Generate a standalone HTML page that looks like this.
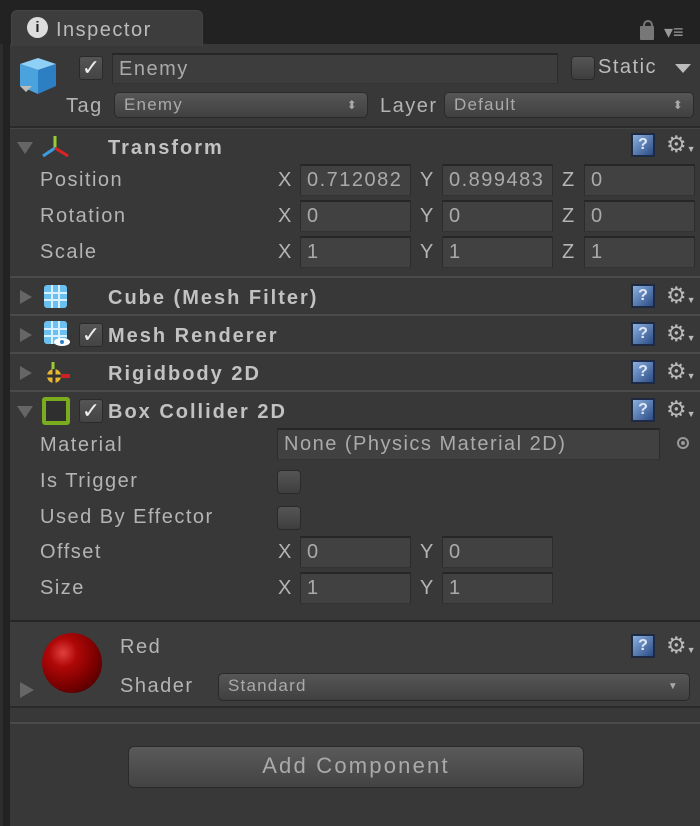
<!DOCTYPE html>
<html><head><meta charset="utf-8"><style>
*{margin:0;padding:0;box-sizing:border-box}
body{width:700px;height:826px;background:#222;position:relative;overflow:hidden;font-family:"Liberation Sans",sans-serif;font-size:20px;color:#b4b4b4}
.a{position:absolute}
.t{position:absolute;white-space:nowrap;line-height:24px;letter-spacing:1.5px}
.b{font-weight:bold;color:#c2c2c2;letter-spacing:2px}
.f{position:absolute;background:#414141;border-top:2px solid #262626;border-left:1px solid #2c2c2c;border-right:1px solid #2c2c2c;border-bottom:1px solid #333;height:32px;color:#aaa;padding-left:6px;line-height:29px;font-size:20px;white-space:nowrap;overflow:hidden;letter-spacing:1.5px}
.cb{position:absolute;width:24px;height:24px;border-radius:4px;background:linear-gradient(#555,#3e3e3e);border:1px solid #2a2a2a}
.ck{position:absolute;width:24px;height:24px;border-radius:3px;background:linear-gradient(#555,#444);border:1px solid #2a2a2a;color:#eee;font-size:22px;line-height:22px;text-align:center}
.dd{position:absolute;height:26px;border-radius:5px;background:linear-gradient(#565656,#404040);border:1px solid #2a2a2a;color:#aaa;font-size:17px;line-height:24px;padding-left:9px;letter-spacing:1.2px}
.tri{position:absolute;width:0;height:0}
.sepd{position:absolute;left:10px;right:0;height:2px;background:#2a2a2a}
.sepl{position:absolute;left:10px;right:0;height:2px;background:#4a4a4a}
.help{position:absolute;width:24px;height:24px;background:linear-gradient(135deg,#8ab0e0,#2c4c84);border:2px solid #1e2a44;color:#e0e8f8;font-size:16px;line-height:20px;text-align:center;font-weight:bold}
.gear{position:absolute;font-size:23px;color:#b8b8b8;line-height:24px}
</style></head><body>
<div class="a" style="left:0;top:44px;width:3px;height:782px;background:#2d2d2d"></div>
<div class="a" style="left:10px;top:44px;width:690px;height:782px;background:#383838"></div>
<div class="a" style="left:11px;top:10px;width:192px;height:36px;background:#3d3d3d;border-radius:6px 6px 0 0;border:1px solid #444;border-bottom:none"></div>
<div class="a" style="left:27px;top:17px;width:21px;height:21px;border-radius:50%;background:#ddd;color:#222;font-size:15px;font-weight:bold;text-align:center;line-height:21px">i</div>
<div class="t" style="left:56px;top:18px;color:#bbb">Inspector</div>
<div class="a" style="left:640px;top:26px;width:14px;height:14px;background:#777;border-radius:1px"></div>
<div class="a" style="left:643px;top:20px;width:10px;height:10px;border:2px solid #777;border-bottom:none;border-radius:5px 5px 0 0"></div>
<div class="t" style="left:664px;top:20px;color:#999;font-size:18px;letter-spacing:0">▾≡</div>
<svg class="a" style="left:16px;top:54px" width="46" height="46"><polygon points="4,10 22,4 40,10 22,16" fill="#8fd0f6"/><polygon points="4,10 22,16 22,40 4,32" fill="#4aa3dd"/><polygon points="22,16 40,10 40,32 22,40" fill="#2d7fc4"/><polygon points="4,32 16,32 10,38" fill="#bbb"/></svg>
<div class="ck" style="left:79px;top:56px">✓</div>
<div class="f" style="left:112px;top:53px;width:446px;height:31px;background:#3d3d3d">Enemy</div>
<div class="cb" style="left:571px;top:56px"></div>
<div class="t" style="left:598px;top:55px;color:#bbb">Static</div>
<div class="tri" style="left:675px;top:64px;border-left:8px solid transparent;border-right:8px solid transparent;border-top:9px solid #bbb"></div>
<div class="t" style="left:66px;top:94px">Tag</div>
<div class="dd" style="left:114px;top:92px;width:254px">Enemy<span style="position:absolute;right:9px;font-size:12px;top:0">⬍</span></div>
<div class="t" style="left:380px;top:94px">Layer</div>
<div class="dd" style="left:444px;top:92px;width:250px">Default<span style="position:absolute;right:9px;font-size:12px;top:0">⬍</span></div>
<div class="sepd" style="top:126px"></div><div class="a" style="left:10px;right:0;top:128px;height:1px;background:#444"></div>
<div class="tri" style="left:17px;top:142px;border-left:8px solid transparent;border-right:8px solid transparent;border-top:12px solid #666"></div>
<svg class="a" style="left:40px;top:134px" width="30" height="26"><line x1="15" y1="2" x2="15" y2="14" stroke="#9c3" stroke-width="3"/><line x1="15" y1="14" x2="3" y2="22" stroke="#3a9de0" stroke-width="3"/><line x1="15" y1="14" x2="28" y2="22" stroke="#d22" stroke-width="3"/></svg>
<div class="t b" style="left:108px;top:136px">Transform</div>
<div class="help" style="left:631px;top:133px">?</div><div class="gear" style="left:666px;top:132px">⚙<span style="font-size:9px">▼</span></div>
<div class="t" style="left:40px;top:168px">Position</div>
<div class="t" style="left:40px;top:204px">Rotation</div>
<div class="t" style="left:40px;top:240px">Scale</div>
<div class="t" style="left:278px;top:168px">X</div><div class="f" style="left:300px;top:164px;width:111px">0.712082</div>
<div class="t" style="left:420px;top:168px">Y</div><div class="f" style="left:442px;top:164px;width:111px">0.899483</div>
<div class="t" style="left:562px;top:168px">Z</div><div class="f" style="left:584px;top:164px;width:111px">0</div>
<div class="t" style="left:278px;top:204px">X</div><div class="f" style="left:300px;top:200px;width:111px">0</div>
<div class="t" style="left:420px;top:204px">Y</div><div class="f" style="left:442px;top:200px;width:111px">0</div>
<div class="t" style="left:562px;top:204px">Z</div><div class="f" style="left:584px;top:200px;width:111px">0</div>
<div class="t" style="left:278px;top:240px">X</div><div class="f" style="left:300px;top:236px;width:111px">1</div>
<div class="t" style="left:420px;top:240px">Y</div><div class="f" style="left:442px;top:236px;width:111px">1</div>
<div class="t" style="left:562px;top:240px">Z</div><div class="f" style="left:584px;top:236px;width:111px">1</div>
<div class="sepl" style="top:276px"></div>
<div class="tri" style="left:20px;top:290px;border-top:7px solid transparent;border-bottom:7px solid transparent;border-left:12px solid #666"></div>
<svg class="a" style="left:43px;top:284px" width="26" height="26"><rect x="1" y="1" width="23" height="23" rx="3" fill="#6cc0ef"/><path d="M1 9H24M1 16H24M9 1V24M16 1V24" stroke="#d8f0ff" stroke-width="2"/></svg>
<div class="t b" style="left:108px;top:286px">Cube (Mesh Filter)</div>
<div class="help" style="left:631px;top:284px">?</div><div class="gear" style="left:666px;top:283px">⚙<span style="font-size:9px">▼</span></div>
<div class="sepl" style="top:314px"></div>
<div class="tri" style="left:20px;top:328px;border-top:7px solid transparent;border-bottom:7px solid transparent;border-left:12px solid #666"></div>
<svg class="a" style="left:43px;top:320px" width="28" height="28"><rect x="1" y="1" width="23" height="23" rx="3" fill="#6cc0ef"/><path d="M1 9H24M1 16H24M9 1V24M16 1V24" stroke="#d8f0ff" stroke-width="2"/><ellipse cx="19" cy="22" rx="8" ry="4" fill="#fff"/><circle cx="19" cy="22" r="2" fill="#2d7fc4"/></svg>
<div class="ck" style="left:79px;top:323px">✓</div>
<div class="t b" style="left:108px;top:324px">Mesh Renderer</div>
<div class="help" style="left:631px;top:322px">?</div><div class="gear" style="left:666px;top:321px">⚙<span style="font-size:9px">▼</span></div>
<div class="sepl" style="top:352px"></div>
<div class="tri" style="left:20px;top:366px;border-top:7px solid transparent;border-bottom:7px solid transparent;border-left:12px solid #666"></div>
<svg class="a" style="left:44px;top:360px" width="28" height="26"><line x1="9" y1="2" x2="9" y2="12" stroke="#9c3" stroke-width="3"/><line x1="12" y1="16" x2="26" y2="16" stroke="#c22" stroke-width="4"/><circle cx="10" cy="16" r="7" fill="#e8b830"/><path d="M10 9V23M3 16H17" stroke="#333" stroke-width="3"/></svg>
<div class="t b" style="left:108px;top:362px">Rigidbody 2D</div>
<div class="help" style="left:631px;top:360px">?</div><div class="gear" style="left:666px;top:359px">⚙<span style="font-size:9px">▼</span></div>
<div class="sepl" style="top:390px"></div>
<div class="tri" style="left:17px;top:406px;border-left:8px solid transparent;border-right:8px solid transparent;border-top:12px solid #666"></div>
<div class="a" style="left:42px;top:397px;width:28px;height:28px;border:4px solid #7bab1e;border-radius:3px;background:#2f2f2f"></div>
<div class="ck" style="left:79px;top:399px">✓</div>
<div class="t b" style="left:108px;top:400px">Box Collider 2D</div>
<div class="help" style="left:631px;top:398px">?</div><div class="gear" style="left:666px;top:397px">⚙<span style="font-size:9px">▼</span></div>
<div class="t" style="left:40px;top:433px">Material</div>
<div class="f" style="left:277px;top:428px;width:383px">None (Physics Material 2D)</div>
<div class="a" style="left:677px;top:437px;width:12px;height:12px;border:2px solid #999;border-radius:50%"><div class="a" style="left:2px;top:2px;width:4px;height:4px;background:#999;border-radius:50%"></div></div>
<div class="t" style="left:40px;top:469px">Is Trigger</div><div class="cb" style="left:277px;top:470px"></div>
<div class="t" style="left:40px;top:505px">Used By Effector</div><div class="cb" style="left:277px;top:506px"></div>
<div class="t" style="left:40px;top:540px">Offset</div>
<div class="t" style="left:40px;top:576px">Size</div>
<div class="t" style="left:278px;top:540px">X</div><div class="f" style="left:300px;top:536px;width:111px">0</div>
<div class="t" style="left:420px;top:540px">Y</div><div class="f" style="left:442px;top:536px;width:111px">0</div>
<div class="t" style="left:278px;top:576px">X</div><div class="f" style="left:300px;top:572px;width:111px">1</div>
<div class="t" style="left:420px;top:576px">Y</div><div class="f" style="left:442px;top:572px;width:111px">1</div>
<div class="a" style="left:10px;top:620px;width:690px;height:88px;background:#3c3c3c;border-top:2px solid #262626;border-bottom:2px solid #2a2a2a"></div>
<div class="a" style="left:42px;top:633px;width:60px;height:60px;border-radius:50%;background:radial-gradient(circle at 35% 33%,#e04040 0,#b00808 25%,#7a0000 60%,#300000 100%)"></div>
<div class="tri" style="left:20px;top:682px;border-top:8px solid transparent;border-bottom:8px solid transparent;border-left:14px solid #666"></div>
<div class="t" style="left:120px;top:635px">Red</div>
<div class="t" style="left:120px;top:674px">Shader</div>
<div class="dd" style="left:218px;top:673px;width:472px;height:28px">Standard<span style="position:absolute;right:10px;font-size:10px;top:1px">▼</span></div>
<div class="help" style="left:631px;top:634px">?</div><div class="gear" style="left:666px;top:633px">⚙<span style="font-size:9px">▼</span></div>
<div class="sepl" style="top:722px"></div>
<div class="a" style="left:128px;top:746px;width:456px;height:42px;border-radius:6px;background:linear-gradient(#5a5a5a,#434343);border:1px solid #2a2a2a;color:#aaa;font-size:22px;text-align:center;line-height:38px;letter-spacing:2.2px">Add Component</div>
</body></html>
